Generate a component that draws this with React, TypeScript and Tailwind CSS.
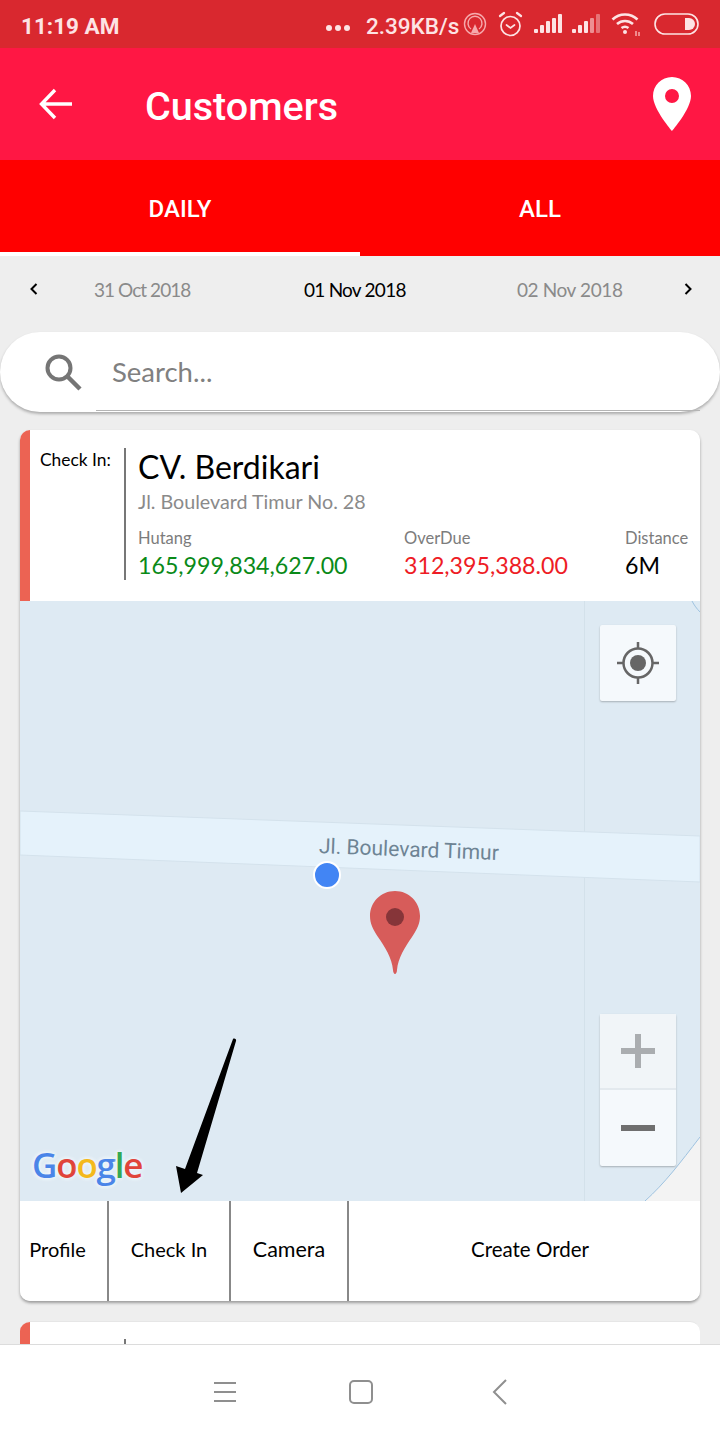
import React from "react";

const Signal = ({ dim }: { dim?: boolean }) => (
  <svg width="28" height="20" viewBox="0 0 28 20" fill="#fde3e4">
    <rect x="0" y="15" width="4" height="4" rx="1" />
    <rect x="6" y="11" width="4" height="8" rx="1" />
    <rect x="12" y="7" width="4" height="12" rx="1" />
    <rect x="18" y="4" width="4" height="15" rx="1" opacity={dim ? 0.55 : 1} />
    <rect x="24" y="0" width="4" height="19" rx="1" opacity={dim ? 0.4 : 1} />
  </svg>
);

const StatusBar = () => (
  <div className="h-12 shrink-0 bg-[#d9282f] flex items-center pl-[21px] text-[#fde3e4] font-['Roboto',sans-serif] font-bold text-[22.500px] leading-none">
    <span className="pt-[4px] w-[98px] whitespace-nowrap">11:19 AM</span>
    <div className="ml-[207px] flex gap-[3px] w-[24px] mt-[8px]">
      <span className="w-[6px] h-[6px] rounded-full bg-[#fde3e4]" />
      <span className="w-[6px] h-[6px] rounded-full bg-[#fde3e4]" />
      <span className="w-[6px] h-[6px] rounded-full bg-[#fde3e4]" />
    </div>
    <span className="ml-[16px] w-[92px] pt-[4px] font-medium whitespace-nowrap">2.39KB/s</span>
    <svg className="ml-[5px]" width="24" height="24" viewBox="0 0 24 24" fill="none" stroke="#f6a9ac" strokeWidth="1.4">
      <circle cx="12" cy="12" r="10.500" />
      <path d="M8 17a7 7 0 1 1 8 0" />
      <path d="M12 12l4 9H8z" fill="#f6a9ac" stroke="none" />
    </svg>
    <svg className="ml-[10px]" width="27" height="26" viewBox="0 0 27 26" fill="none" stroke="#fde3e4" strokeWidth="1.7" strokeLinecap="round">
      <circle cx="13.500" cy="15" r="9.500" />
      <path d="M9.500 14l4 3 4-3" />
      <path d="M3 5l4-3M24 5l-4-3" strokeWidth="2.200" />
    </svg>
    <div className="ml-[10px]"><Signal /></div>
    <div className="ml-[10px]"><Signal dim /></div>
    <svg className="ml-[11px]" width="30" height="26" viewBox="0 0 30 26" fill="none" stroke="#fde3e4" strokeWidth="2.600">
      <path d="M1.500 8.500a18 18 0 0 1 25 0" />
      <path d="M6 13a12 12 0 0 1 16 0" />
      <path d="M10.500 17a6 6 0 0 1 7 0" />
      <circle cx="14" cy="21" r="2" fill="#fde3e4" stroke="none" />
      <path d="M25 20v5M28 21v4" stroke="#f6a9ac" strokeWidth="1.500" />
    </svg>
    <svg className="ml-[13px]" width="45" height="22" viewBox="0 0 45 22" fill="none">
      <rect x="1" y="1" width="43" height="20" rx="10" stroke="#fde3e4" strokeWidth="1.600" />
      <path d="M31 5h4a6 6 0 0 1 0 12h-4z" fill="#fde3e4" />
    </svg>
  </div>
);

const AppBar = () => (
  <div className="h-[112px] shrink-0 bg-[#ff1744] flex items-center text-white font-['Roboto',sans-serif]">
    <svg className="ml-[38px]" width="34" height="32" viewBox="0 0 34 32" fill="none" stroke="white" strokeWidth="3.400">
      <path d="M34 16H4M17 2 3.500 16 17 30" />
    </svg>
    <span className="ml-[73px] w-[200px] pt-[6px] text-[39.500px] leading-none font-medium whitespace-nowrap">Customers</span>
    <svg className="ml-auto mr-[29px]" width="38" height="54" viewBox="0 0 38 54">
      <path fillRule="evenodd" d="M19 0C8.500 0 0 8.500 0 19c0 13 19 35 19 35s19-22 19-35C38 8.500 29.500 0 19 0zm0 26a7 7 0 1 1 0-14 7 7 0 0 1 0 14z" fill="white" />
    </svg>
  </div>
);

const Tabs = () => (
  <div className="h-[96px] shrink-0 bg-[#ff0000] flex text-white font-['Roboto',sans-serif] font-medium text-[24px] leading-none">
    <div className="w-1/2 flex items-center justify-center pt-[6px] border-b-4 border-white">DAILY</div>
    <div className="w-1/2 flex items-center justify-center pt-[6px] border-b-4 border-[#ff0000]">ALL</div>
  </div>
);

const Chevron = ({ right }: { right?: boolean }) => (
  <svg width="8" height="12" viewBox="0 0 8 12" fill="none" stroke="black" strokeWidth="2">
    <path d={right ? "M1.500 1l5 5-5 5" : "M6.500 1l-5 5 5 5"} />
  </svg>
);

const DateRow = () => (
  <div className="h-[66px] flex items-center text-[19px] leading-none">
    <div className="ml-[30px] w-[8px] flex"><Chevron /></div>
    <span className="ml-[56px] w-[98px] tracking-[-0.950px] text-[#8a8a8a] whitespace-nowrap">31 Oct 2018</span>
    <span className="ml-[112px] w-[104px] tracking-[-0.750px] text-black whitespace-nowrap">01 Nov 2018</span>
    <span className="ml-[109px] w-[109px] tracking-[-0.400px] text-[#8a8a8a] whitespace-nowrap">02 Nov 2018</span>
    <div className="ml-[58px] w-[8px] flex"><Chevron right /></div>
  </div>
);

const SearchBar = () => (
  <div className="h-[80px] mt-[10px] bg-white rounded-[40px] shadow-[0_2px_3px_rgba(0,0,0,0.28)] flex items-center shrink-0">
    <svg className="ml-[45px]" width="37" height="37" viewBox="0 0 37 37" fill="none" stroke="#757575" strokeWidth="4">
      <circle cx="14" cy="14" r="11.500" />
      <path d="M22 22l13 13" strokeWidth="4.500" />
    </svg>
    <div className="ml-[14px] flex-1 h-[78px] mr-[20px] pl-[16px] pt-[23px] border-b border-[#b5b5b5] text-[27.500px] leading-[32px] text-[#808080]">Search...</div>
  </div>
);

const Stat = ({ label, value, color, className }: { label: string; value: string; color: string; className: string }) => (
  <div className={className}>
    <div className="text-[16.500px] leading-[18px] text-[#7c7c7c]">{label}</div>
    <div className={`text-[23.200px] leading-[28px] mt-[4px] whitespace-nowrap ${color}`}>{value}</div>
  </div>
);

const CardHeader = () => (
  <div className="h-[171px] flex bg-white shrink-0">
    <div className="w-[10px] bg-[#ec6353]" />
    <div className="w-[84px] ml-[10px] pt-[20px] text-[17.400px] leading-[20px] text-black whitespace-nowrap">Check In:</div>
    <div className="w-[2px] h-[132px] mt-[18px] bg-[#777]" />
    <div className="ml-[12px] flex-1 pt-[17px]">
      <div className="text-[32px] leading-[40px] text-black">CV. Berdikari</div>
      <div className="text-[19.700px] leading-[24px] mt-[3px] text-[#8a8a8a]">Jl. Boulevard Timur No. 28</div>
      <div className="flex mt-[15px]">
        <Stat className="w-[266px]" label="Hutang" value="165,999,834,627.00" color="text-[#0a8a18]" />
        <Stat className="w-[221px]" label="OverDue" value="312,395,388.00" color="text-[#ee1c25]" />
        <Stat className="w-[70px]" label="Distance" value="6M" color="text-black" />
      </div>
    </div>
  </div>
);

const MapArea = () => (
  <div className="relative h-[600px] bg-[#deeaf3] overflow-hidden shrink-0">
    <svg className="absolute inset-0" width="680" height="600" viewBox="0 0 680 600">
      <path d="M564.500 0V600" stroke="#d3e1ea" strokeWidth="1" />
      <path d="M0 210L680 235V281L0 254Z" fill="#e5f2fb" stroke="#d4e2ec" strokeWidth="1" />
      <path d="M680 536C660 562 645 582 625 600H680Z" fill="#f3f3f3" />
      <path d="M680 536C660 562 645 582 625 600" fill="none" stroke="#9fc3e0" strokeWidth="1" />
      <path d="M672 0C674 4 677 8 680 11" fill="none" stroke="#9fc3e0" strokeWidth="1" />
      <circle cx="307" cy="274" r="13" fill="#4285f4" stroke="white" strokeWidth="2" />
      <path d="M375 290c-14 0-25 11-25 25 0 8 3 13 8 21 7 10 14 21 15 33 0 2 1 4 2 4s2-2 2-4c1-12 8-23 15-33 5-8 8-13 8-21 0-14-11-25-25-25z" fill="#d75c5a" />
      <circle cx="375" cy="316" r="9" fill="#863539" />
    </svg>
    <div className="absolute left-[299px] top-[235px] rotate-[2.200deg] origin-left font-['Roboto',sans-serif] text-[21px] leading-none text-[#6e8494] whitespace-nowrap">Jl. Boulevard Timur</div>
    <div className="absolute left-[580px] top-[24px] w-[76px] h-[76px] rounded-[2px] bg-[#f5f9fc] shadow-[0_1px_2px_rgba(0,0,0,0.25)] flex items-center justify-center">
      <svg width="42" height="42" viewBox="0 0 42 42" fill="none" stroke="#666" strokeWidth="2.500">
        <circle cx="21" cy="21" r="14.500" />
        <circle cx="21" cy="21" r="8" fill="#666" stroke="none" />
        <path d="M21 0v7M21 35v7M0 21h7M35 21h7" />
      </svg>
    </div>
    <div className="absolute left-[580px] top-[413px] w-[76px] h-[152px] rounded-[2px] bg-[#f5f9fc] shadow-[0_1px_2px_rgba(0,0,0,0.25)] flex flex-col">
      <div className="h-[76px] flex items-center justify-center border-b-2 border-[#e3e9ee] bg-[#f1f5f8]">
        <svg width="34" height="34" viewBox="0 0 34 34" fill="#aaadb0"><path d="M14 0h6v14h14v6H20v14h-6V20H0v-6h14z" /></svg>
      </div>
      <div className="h-[76px] flex items-center justify-center">
        <div className="w-[34px] h-[6px] bg-[#6f6f6f]" />
      </div>
    </div>
    <div className="absolute left-[12px] top-[540px] font-['Open_Sans',sans-serif] font-semibold text-[35px] leading-[48px] tracking-[-1.200px] [text-shadow:0_0_4px_#f2f8fc,0_0_4px_#f2f8fc] whitespace-nowrap">
      <span className="text-[#4a85e8]">G</span>
      <span className="text-[#e0443a]">o</span>
      <span className="text-[#f4b91c]">o</span>
      <span className="text-[#4a85e8]">g</span>
      <span className="text-[#34a853]">l</span>
      <span className="text-[#e0443a]">e</span>
    </div>
    <svg className="absolute left-[150px] top-[435px]" width="70" height="165" viewBox="0 0 70 165">
      <path d="M63 3C64 2 67 3 66 5L27 137 33 139 11 157 6 130 15 133Z" fill="black" />
    </svg>
  </div>
);

const Action = ({ label, className }: { label: string; className: string }) => (
  <div className={`h-full flex items-center justify-center leading-none text-black whitespace-nowrap ${className}`}>{label}</div>
);

const Actions = () => (
  <div className="h-[100px] flex bg-white shrink-0">
    <Action label="Profile" className="w-[89px] border-r-2 border-[#888] pr-[12px] pb-[5px] text-[20px]" />
    <Action label="Check In" className="w-[122px] border-r-2 border-[#888] pb-[5px] text-[20px]" />
    <Action label="Camera" className="w-[118px] border-r-2 border-[#888] pb-[3px] text-[21.500px]" />
    <Action label="Create Order" className="flex-1 pl-[11px] pb-[3px] text-[20.500px]" />
  </div>
);

const NavBar = () => (
  <div className="h-[96px] shrink-0 bg-white border-t border-[#dcdcdc] flex items-center">
    <svg className="ml-[214px] mt-[-2px]" width="22" height="22" viewBox="0 0 22 22" fill="#8f8f8f">
      <rect y="1" width="22" height="2" />
      <rect y="10" width="22" height="2" />
      <rect y="19" width="22" height="2" />
    </svg>
    <svg className="ml-[113px] mt-[-2px]" width="24" height="24" viewBox="0 0 24 24" fill="none" stroke="#8f8f8f" strokeWidth="2">
      <rect x="1" y="1" width="22" height="22" rx="4" />
    </svg>
    <svg className="ml-[119px] mt-[-2px]" width="15" height="26" viewBox="0 0 15 26" fill="none" stroke="#8f8f8f" strokeWidth="2">
      <path d="M14 1 2 13l12 12" />
    </svg>
  </div>
);

export default function App() {
  return (
    <div className="w-[720px] h-[1440px] flex flex-col overflow-hidden bg-[#eeeeee] font-['Lato',sans-serif]">
      <StatusBar />
      <AppBar />
      <Tabs />
      <div className="flex-1 min-h-0 overflow-hidden flex flex-col">
        <DateRow />
        <SearchBar />
        <div className="mx-5 mt-[18px] rounded-[10px] overflow-hidden shadow-[0_2px_3px_rgba(0,0,0,0.35)] flex flex-col shrink-0">
          <CardHeader />
          <MapArea />
          <Actions />
        </div>
        <div className="mx-5 mt-[20px] rounded-t-[10px] overflow-hidden bg-white flex flex-1 min-h-[23px] shrink-0 border-t border-[#e6e6e6]">
          <div className="w-[10px] bg-[#ec6353]" />
          <div className="ml-[94px] mt-[17px] w-[2px] bg-[#777]" />
        </div>
      </div>
      <NavBar />
    </div>
  );
}
